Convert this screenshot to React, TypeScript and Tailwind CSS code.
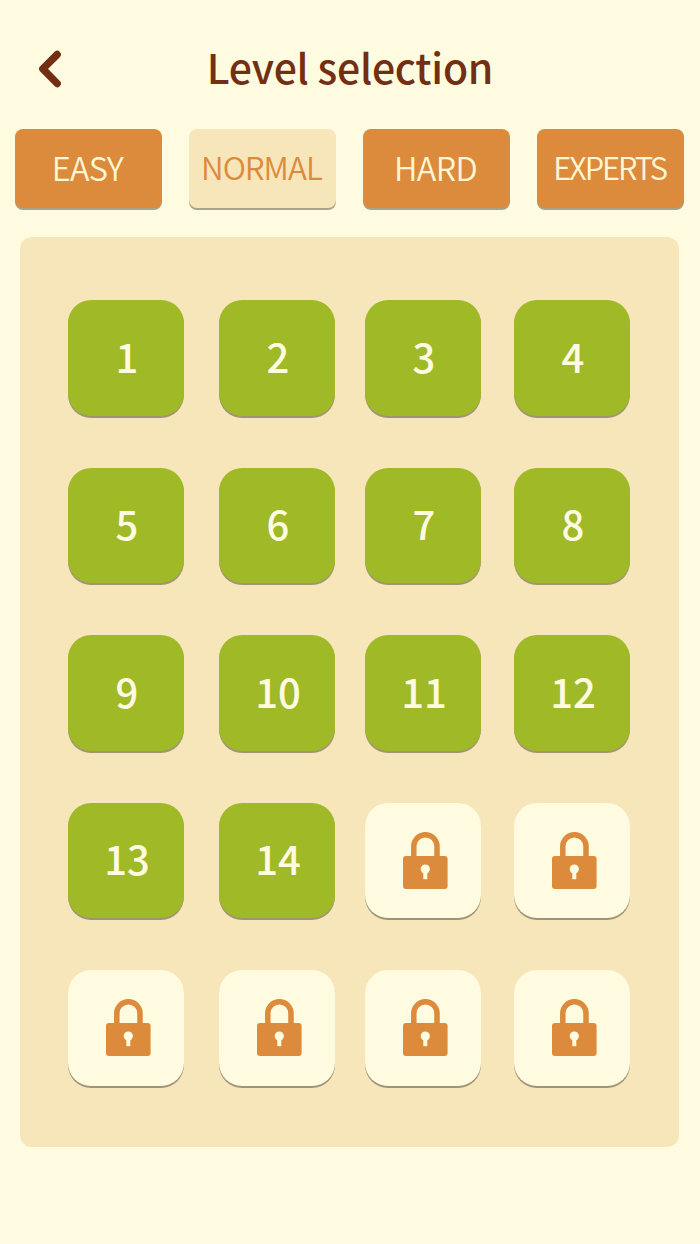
import React from "react";

const font = "font-['Noto_Sans_CJK_SC','Noto_Sans',sans-serif]";

const tabs = [
  { label: "EASY", active: false, text: "text-[32.5px] tracking-[-0.7px] pr-[2px]" },
  { label: "NORMAL", active: true, text: "text-[31.5px] tracking-[-1px] pr-[2px] pb-px font-[350]" },
  { label: "HARD", active: false, text: "text-[32.5px] tracking-[-0.6px] pr-[2px]" },
  { label: "EXPERTS", active: false, text: "text-[31px] tracking-[-2.1px] pr-[2px]" },
];

const levels = Array.from({ length: 20 }, (_, i) => ({ id: i + 1, locked: i >= 14 }));

function LockIcon() {
  return (
    <svg width="45" height="57" viewBox="0 0 45 57" className="mb-px ml-[4.6px]" aria-hidden="true">
      <path d="M10.8 26V14.3a11.6 11.6 0 0 1 23.2 0V26" fill="none" stroke="#dc8b3c" strokeWidth="5.5" />
      <rect x="0" y="24" width="44.6" height="33" rx="3" fill="#dc8b3c" />
      <circle cx="22.3" cy="37.1" r="4.6" fill="#fffbe0" />
      <rect x="20.3" y="38" width="4" height="9.2" fill="#fffbe0" />
    </svg>
  );
}

function LevelTile({ id, locked }: { id: number; locked: boolean }) {
  return (
    <button
      className={`flex h-[115.5px] w-[115.5px] items-center justify-center rounded-[23px] shadow-[0_2px_0_#a09478] ${
        locked ? "bg-[#fffbe0]" : "bg-[#a0b927]"
      }`}
    >
      {locked ? (
        <LockIcon />
      ) : (
        <span className="pb-[5px] pl-[2.5px] text-[40px] leading-[58px] font-medium text-[#fffbe0]">{id}</span>
      )}
    </button>
  );
}

export default function App() {
  return (
    <main className={`h-[1244px] w-[700px] overflow-hidden bg-[#fffbe0] ${font}`}>
      <header className="grid h-[129.4px] grid-cols-[100px_500px_100px] pt-[36px]">
        <button className="flex h-[65px] items-center pl-[38px]" aria-label="Back">
          <svg width="24" height="38" viewBox="0 0 24 38" aria-hidden="true">
            <path d="M19.2 4.5L4.8 18.8L19.2 33.5" fill="none" stroke="#732f13" strokeWidth="7.4" strokeLinecap="round" strokeLinejoin="round" />
          </svg>
        </button>
        <h1 className="text-center text-[41px] leading-[60px] font-medium tracking-[-0.25px] whitespace-nowrap text-[#732f13]">Level selection</h1>
      </header>
      <nav className="flex gap-[26.6px] pl-[14.6px]">
        {tabs.map((t) => (
          <button
            key={t.label}
            className={`flex h-[79px] w-[147.5px] shrink-0 items-center justify-center rounded-[8px] pb-[4px] leading-[48px] font-[350] whitespace-nowrap shadow-[0_2px_0_#a7a38d] ${
              t.active ? "bg-[#f7e6ba] text-[#dc8b3c]" : "bg-[#dc8b3c] text-[#fff6d6]"
            }`}
          >
            <span className={t.text}>{t.label}</span>
          </button>
        ))}
      </nav>
      <section className="mt-[29px] ml-[20px] grid h-[909.5px] w-[659px] grid-cols-[151px_146px_149px_116px] auto-rows-[167.5px] rounded-[12px] bg-[#f7e6ba] pt-[62.9px] pl-[48px]">
        {levels.map((l) => (
          <LevelTile key={l.id} {...l} />
        ))}
      </section>
    </main>
  );
}
